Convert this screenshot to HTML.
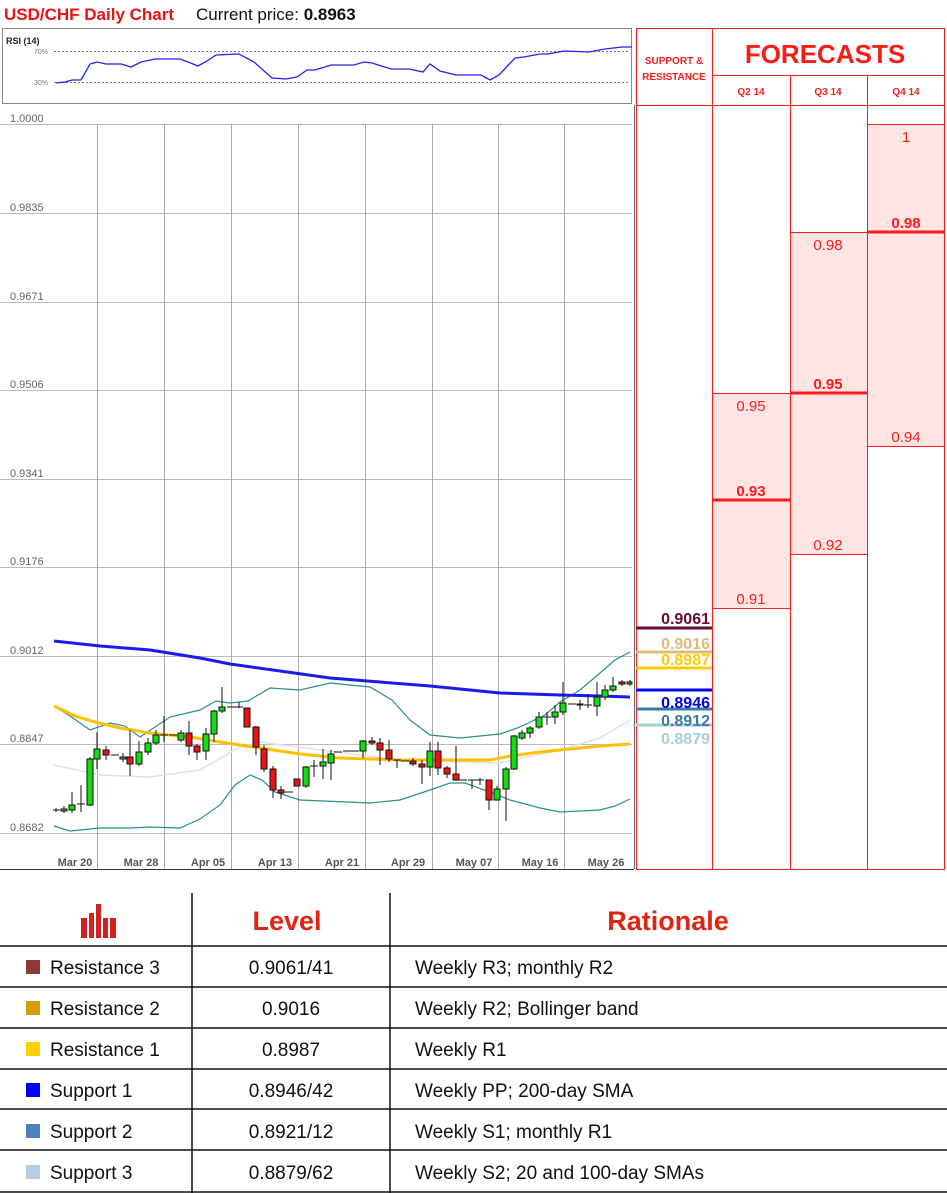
<!DOCTYPE html>
<html><head><meta charset="utf-8">
<style>
html,body{margin:0;padding:0;background:#fff;}
svg{display:block;}
text{font-family:"Liberation Sans",sans-serif;}
</style></head><body>
<svg width="947" height="1193" viewBox="0 0 947 1193" xmlns="http://www.w3.org/2000/svg">
<!-- title -->
<text x="4" y="20" font-size="17" font-weight="bold" fill="#ee1111">USD/CHF Daily Chart</text>
<text x="196" y="20" font-size="17" fill="#111">Current price: <tspan font-weight="bold">0.8963</tspan></text>

<!-- RSI box -->
<rect x="2.5" y="28.5" width="629" height="75" fill="#fff" stroke="#888"/>
<text x="6" y="44" font-size="9" font-weight="bold" fill="#222">RSI (14)</text>
<text x="34" y="54" font-size="7" fill="#777">70%</text>
<text x="34" y="85" font-size="7" fill="#777">30%</text>
<line x1="54" y1="51.5" x2="630" y2="51.5" stroke="#777" stroke-dasharray="2,2"/>
<line x1="54" y1="82.5" x2="630" y2="82.5" stroke="#777" stroke-dasharray="2,2"/>
<polyline fill="none" stroke="#2222ee" stroke-width="1.3" points="56,83 65,82 72,80 81,80 90,64 97,62 106,64 121,64 131,67 141,62 155,59 180,59 188,62 198,66 207,61 216,55 239,54 254,62 272,78 286,79 297,77 307,70 315,70 331,65 354,65 364,62 372,63 391,69 409,69 423,72 430,64 440,71 456,75 481,75 490,80 499,75 515,58 524,57 540,54 548,54 564,51 589,52 605,49 622,47 632,47"/>

<!-- main chart grid -->
<g stroke="#bbb" stroke-width="1">
<line x1="0" y1="124.5" x2="632" y2="124.5"/>
<line x1="0" y1="213.5" x2="632" y2="213.5"/>
<line x1="0" y1="302.5" x2="632" y2="302.5"/>
<line x1="0" y1="390.5" x2="632" y2="390.5"/>
<line x1="0" y1="479.5" x2="632" y2="479.5"/>
<line x1="0" y1="567.5" x2="632" y2="567.5"/>
<line x1="0" y1="656.5" x2="632" y2="656.5"/>
<line x1="0" y1="744.5" x2="632" y2="744.5"/>
<line x1="0" y1="833.5" x2="632" y2="833.5"/>
</g>
<g stroke="#aaa" stroke-width="1">
<line x1="97.5" y1="124" x2="97.5" y2="869"/>
<line x1="164.5" y1="124" x2="164.5" y2="869"/>
<line x1="231.5" y1="124" x2="231.5" y2="869"/>
<line x1="298.5" y1="124" x2="298.5" y2="869"/>
<line x1="365.5" y1="124" x2="365.5" y2="869"/>
<line x1="432.5" y1="124" x2="432.5" y2="869"/>
<line x1="498.5" y1="124" x2="498.5" y2="869"/>
<line x1="564.5" y1="124" x2="564.5" y2="869"/>
</g>
<line x1="0" y1="869.5" x2="634" y2="869.5" stroke="#333"/>
<line x1="634.5" y1="105" x2="634.5" y2="869" stroke="#666"/>
<g font-size="11" fill="#666">
<text x="10" y="122">1.0000</text>
<text x="10" y="211">0.9835</text>
<text x="10" y="300">0.9671</text>
<text x="10" y="388">0.9506</text>
<text x="10" y="477">0.9341</text>
<text x="10" y="565">0.9176</text>
<text x="10" y="654">0.9012</text>
<text x="10" y="742">0.8847</text>
<text x="10" y="831">0.8682</text>
</g>
<g font-size="11" font-weight="bold" fill="#555" text-anchor="middle">
<text x="75" y="866">Mar 20</text><text x="141" y="866">Mar 28</text><text x="208" y="866">Apr 05</text>
<text x="275" y="866">Apr 13</text><text x="342" y="866">Apr 21</text><text x="408" y="866">Apr 29</text>
<text x="474" y="866">May 07</text><text x="540" y="866">May 16</text><text x="606" y="866">May 26</text>
</g>

<!-- indicators -->
<polyline fill="none" stroke="#e2e2e2" stroke-width="1.5" points="54,765 100,775 150,777 200,770 240,747 260,742 320,750 400,760 500,763 560,750 600,738 630,720"/>
<polyline fill="none" stroke="#2a8f8f" stroke-width="1.2" points="54,706 70,716 90,730 110,723 125,726 140,737 170,717 200,710 216,701 230,703 248,701 270,688 300,690 330,683 370,687 392,700 410,720 430,735 460,738 500,734 520,727 545,715 560,702 580,690 600,673 615,660 630,652"/>
<polyline fill="none" stroke="#2a8f8f" stroke-width="1.2" points="54,826 70,831 100,828 130,828 150,827 180,828 200,819 220,805 235,785 250,775 262,780 275,792 300,800 370,803 400,800 430,790 450,783 465,783 490,792 510,800 540,808 560,812 600,810 615,806 630,799"/>
<polyline fill="none" stroke="#ffc000" stroke-width="3" points="54,706 75,716 95,722 120,728 150,733 190,737 220,742 260,748 300,754 340,758 400,760 450,760 490,760 510,756 540,752 570,749 600,746 630,744"/>
<polyline fill="none" stroke="#1a1aee" stroke-width="3" points="54,641 100,646 150,650 200,658 230,664 280,671 330,678 380,682 430,686 470,690 500,693 530,694 560,695 600,696 630,697"/>

<!-- candles -->
<g stroke="#111" stroke-width="1">
<line x1="56" y1="808" x2="56" y2="812"/><line x1="53" y1="810" x2="60" y2="810"/>
<line x1="64" y1="806" x2="64" y2="813"/><rect x="61" y="809" width="6" height="2" fill="#11dd11"/>
<line x1="72" y1="792" x2="72" y2="813"/><rect x="69" y="805" width="6" height="5" fill="#11dd11"/>
<line x1="81" y1="785" x2="81" y2="812"/><line x1="77" y1="804" x2="85" y2="804"/>
<line x1="90" y1="757" x2="90" y2="806"/><rect x="87" y="759" width="6" height="46" fill="#11dd11"/>
<line x1="97" y1="732" x2="97" y2="769"/><rect x="94" y="749" width="6" height="10" fill="#11dd11"/>
<line x1="106" y1="746" x2="106" y2="760"/><rect x="103" y="750" width="6" height="5" fill="#ee1111"/>
<line x1="111" y1="755" x2="119" y2="755"/>
<line x1="123" y1="753" x2="123" y2="762"/><rect x="120" y="757" width="6" height="2" fill="#11dd11"/>
<line x1="130" y1="730" x2="130" y2="776"/><rect x="127" y="757" width="6" height="7" fill="#ee1111"/>
<line x1="139" y1="741" x2="139" y2="766"/><rect x="136" y="752" width="6" height="12" fill="#11dd11"/>
<line x1="148" y1="738" x2="148" y2="755"/><rect x="145" y="743" width="6" height="9" fill="#11dd11"/>
<line x1="156" y1="730" x2="156" y2="745"/><rect x="153" y="735" width="6" height="8" fill="#11dd11"/>
<line x1="164" y1="716" x2="164" y2="742"/><line x1="160" y1="735" x2="168" y2="735"/>
<line x1="169" y1="735" x2="177" y2="735"/>
<line x1="181" y1="730" x2="181" y2="742"/><rect x="178" y="733" width="6" height="7" fill="#11dd11"/>
<line x1="189" y1="721" x2="189" y2="755"/><rect x="186" y="733" width="6" height="13" fill="#ee1111"/>
<line x1="197" y1="744" x2="197" y2="760"/><rect x="194" y="746" width="6" height="6" fill="#ee1111"/>
<line x1="206" y1="728" x2="206" y2="760"/><rect x="203" y="734" width="6" height="17" fill="#11dd11"/>
<line x1="214" y1="710" x2="214" y2="742"/><rect x="211" y="711" width="6" height="23" fill="#11dd11"/>
<line x1="222" y1="687" x2="222" y2="713"/><rect x="219" y="707" width="6" height="4" fill="#11dd11"/>
<line x1="227" y1="707" x2="235" y2="707"/>
<line x1="239" y1="702" x2="239" y2="708"/><line x1="235" y1="707" x2="243" y2="707"/>
<rect x="244" y="708" width="6" height="19" fill="#ee1111"/>
<line x1="256" y1="726" x2="256" y2="755"/><rect x="253" y="727" width="6" height="20" fill="#ee1111"/>
<line x1="264" y1="745" x2="264" y2="772"/><rect x="261" y="749" width="6" height="20" fill="#ee1111"/>
<line x1="273" y1="766" x2="273" y2="798"/><rect x="270" y="769" width="6" height="21" fill="#ee1111"/>
<line x1="281" y1="786" x2="281" y2="799"/><rect x="278" y="790" width="6" height="3" fill="#ee1111"/>
<line x1="285" y1="792" x2="293" y2="792"/>
<rect x="294" y="779" width="6" height="7" fill="#ee1111"/>
<line x1="306" y1="766" x2="306" y2="788"/><rect x="303" y="767" width="6" height="19" fill="#11dd11"/>
<line x1="314" y1="760" x2="314" y2="777"/><line x1="310" y1="766" x2="318" y2="766"/>
<line x1="323" y1="749" x2="323" y2="779"/><rect x="320" y="762" width="6" height="4" fill="#11dd11"/>
<line x1="331" y1="750" x2="331" y2="780"/><rect x="328" y="754" width="6" height="9" fill="#11dd11"/>
<line x1="334" y1="752" x2="342" y2="752"/>
<line x1="343" y1="751" x2="351" y2="751"/>
<line x1="351" y1="751" x2="359" y2="751"/>
<line x1="363" y1="740" x2="363" y2="758"/><rect x="360" y="741" width="6" height="10" fill="#11dd11"/>
<line x1="372" y1="737" x2="372" y2="745"/><rect x="369" y="741" width="6" height="2" fill="#ee1111"/>
<line x1="380" y1="738" x2="380" y2="765"/><rect x="377" y="743" width="6" height="7" fill="#ee1111"/>
<line x1="389" y1="740" x2="389" y2="762"/><rect x="386" y="750" width="6" height="9" fill="#ee1111"/>
<line x1="397" y1="760" x2="397" y2="768"/><line x1="393" y1="760" x2="401" y2="760"/>
<line x1="401" y1="761" x2="409" y2="761"/>
<line x1="413" y1="758" x2="413" y2="766"/><rect x="410" y="761" width="6" height="3" fill="#ee1111"/>
<line x1="422" y1="760" x2="422" y2="784"/><rect x="419" y="764" width="6" height="3" fill="#ee1111"/>
<line x1="430" y1="742" x2="430" y2="776"/><rect x="427" y="751" width="6" height="16" fill="#11dd11"/>
<line x1="438" y1="742" x2="438" y2="775"/><rect x="435" y="751" width="6" height="17" fill="#ee1111"/>
<line x1="447" y1="766" x2="447" y2="778"/><rect x="444" y="768" width="6" height="6" fill="#ee1111"/>
<line x1="456" y1="746" x2="456" y2="781"/><rect x="453" y="774" width="6" height="6" fill="#ee1111"/>
<line x1="459" y1="780" x2="467" y2="780"/>
<line x1="472" y1="780" x2="472" y2="789"/><line x1="468" y1="780" x2="476" y2="780"/>
<line x1="480" y1="778" x2="480" y2="785"/><line x1="476" y1="780" x2="484" y2="780"/>
<line x1="489" y1="780" x2="489" y2="810"/><rect x="486" y="780" width="6" height="20" fill="#ee1111"/>
<line x1="497" y1="786" x2="497" y2="800"/><rect x="494" y="789" width="6" height="11" fill="#11dd11"/>
<line x1="506" y1="767" x2="506" y2="821"/><rect x="503" y="769" width="6" height="20" fill="#11dd11"/>
<line x1="514" y1="735" x2="514" y2="770"/><rect x="511" y="736" width="6" height="33" fill="#11dd11"/>
<line x1="522" y1="730" x2="522" y2="740"/><rect x="519" y="733" width="6" height="5" fill="#11dd11"/>
<line x1="530" y1="726" x2="530" y2="738"/><rect x="527" y="728" width="6" height="5" fill="#11dd11"/>
<line x1="539" y1="712" x2="539" y2="729"/><rect x="536" y="717" width="6" height="10" fill="#11dd11"/>
<line x1="547" y1="712" x2="547" y2="725"/><line x1="543" y1="717" x2="551" y2="717"/>
<line x1="555" y1="705" x2="555" y2="724"/><rect x="552" y="712" width="6" height="5" fill="#11dd11"/>
<line x1="563" y1="682" x2="563" y2="715"/><rect x="560" y="703" width="6" height="9" fill="#11dd11"/>
<line x1="568" y1="704" x2="576" y2="704"/>
<line x1="580" y1="700" x2="580" y2="710"/><rect x="577" y="704" width="6" height="1" fill="#ee1111"/>
<line x1="588" y1="694" x2="588" y2="708"/><line x1="584" y1="705" x2="592" y2="705"/>
<line x1="597" y1="682" x2="597" y2="716"/><rect x="594" y="697" width="6" height="9" fill="#11dd11"/>
<line x1="605" y1="685" x2="605" y2="700"/><rect x="602" y="690" width="6" height="7" fill="#11dd11"/>
<line x1="613" y1="677" x2="613" y2="692"/><rect x="610" y="686" width="6" height="4" fill="#11dd11"/>
<line x1="622" y1="680" x2="622" y2="686"/><rect x="619" y="682" width="6" height="2" fill="#ee1111"/>
<line x1="630" y1="680" x2="630" y2="686"/><rect x="627" y="682" width="5" height="2" fill="#11dd11"/>
</g>

<!-- right forecast panel -->
<rect x="867" y="124" width="77" height="322" fill="#ffe4e4"/>
<rect x="790" y="232" width="77" height="322" fill="#ffe4e4"/>
<rect x="712" y="393" width="78" height="215" fill="#ffe4e4"/>
<g stroke="#ff1a1a" stroke-width="1" fill="none">
<rect x="636.5" y="28.5" width="308" height="841"/>
<line x1="712.5" y1="28" x2="712.5" y2="869"/>
<line x1="790.5" y1="75" x2="790.5" y2="869"/>
<line x1="867.5" y1="75" x2="867.5" y2="869"/>
<line x1="712" y1="75.5" x2="945" y2="75.5"/>
<line x1="636" y1="105.5" x2="945" y2="105.5"/>
<line x1="867" y1="124.5" x2="945" y2="124.5"/>
<line x1="867" y1="446.5" x2="945" y2="446.5"/>
<line x1="790" y1="554.5" x2="867" y2="554.5"/>
<line x1="712" y1="393.5" x2="790" y2="393.5"/>
<line x1="712" y1="608.5" x2="790" y2="608.5"/>
<line x1="790" y1="232.5" x2="867" y2="232.5"/>
</g>
<g stroke="#ff1a1a" stroke-width="3">
<line x1="867" y1="232" x2="945" y2="232"/>
<line x1="790" y1="393" x2="867" y2="393"/>
<line x1="712" y1="500" x2="790" y2="500"/>
</g>
<g fill="#ff1a1a" text-anchor="middle">
<text x="674" y="64" font-size="10" font-weight="bold">SUPPORT &amp;</text>
<text x="674" y="80" font-size="10" font-weight="bold">RESISTANCE</text>
<text x="825" y="63" font-size="26" font-weight="bold">FORECASTS</text>
<text x="751" y="95" font-size="10" font-weight="bold">Q2 14</text>
<text x="828" y="95" font-size="10" font-weight="bold">Q3 14</text>
<text x="906" y="95" font-size="10" font-weight="bold">Q4 14</text>
<g font-size="15">
<text x="906" y="142">1</text>
<text x="906" y="442">0.94</text>
<text x="828" y="250">0.98</text>
<text x="828" y="550">0.92</text>
<text x="751" y="411">0.95</text>
<text x="751" y="604">0.91</text>
</g>
<g font-size="15" font-weight="bold">
<text x="906" y="228">0.98</text>
<text x="828" y="389">0.95</text>
<text x="751" y="496">0.93</text>
</g>
</g>
<!-- S&R levels -->
<g stroke-width="3">
<line x1="636" y1="628" x2="712" y2="628" stroke="#6b0a33"/>
<line x1="636" y1="652" x2="712" y2="652" stroke="#e0bb77"/>
<line x1="636" y1="668" x2="712" y2="668" stroke="#ffcc00"/>
<line x1="636" y1="690" x2="712" y2="690" stroke="#0000ee"/>
<line x1="636" y1="709" x2="712" y2="709" stroke="#3a7aa0"/>
<line x1="636" y1="725" x2="712" y2="725" stroke="#a8d0d4"/>
</g>
<g font-size="16" font-weight="bold" text-anchor="end">
<text x="710" y="624" fill="#6b0a33">0.9061</text>
<text x="710" y="649" fill="#e0bb77">0.9016</text>
<text x="710" y="665" fill="#ffcc00">0.8987</text>
<text x="710" y="708" fill="#0000ee">0.8946</text>
<text x="710" y="726" fill="#3a7aa0">0.8912</text>
<text x="710" y="744" fill="#a8d0d4">0.8879</text>
</g>

<!-- table -->
<g stroke="#111" stroke-width="1.5">
<line x1="192" y1="893" x2="192" y2="1193"/>
<line x1="390" y1="893" x2="390" y2="1193"/>
<line x1="0" y1="946" x2="947" y2="946"/>
<line x1="0" y1="987" x2="947" y2="987"/>
<line x1="0" y1="1028" x2="947" y2="1028"/>
<line x1="0" y1="1069" x2="947" y2="1069"/>
<line x1="0" y1="1109" x2="947" y2="1109"/>
<line x1="0" y1="1150" x2="947" y2="1150"/>
<line x1="0" y1="1192" x2="947" y2="1192"/>
</g>
<!-- bar icon -->
<g fill="#d92020">
<rect x="81" y="918" width="6" height="20"/>
<rect x="89" y="913" width="5" height="25"/>
<rect x="96" y="904" width="5" height="34"/>
<rect x="103" y="918" width="5" height="20"/>
<rect x="110" y="918" width="6" height="20"/>
</g>
<g fill="#e02410" font-size="27" font-weight="bold" text-anchor="middle">
<text x="287" y="930">Level</text>
<text x="668" y="930">Rationale</text>
</g>
<rect x="26" y="960" width="14" height="14" fill="#8b3a3a"/>
<rect x="26" y="1001" width="14" height="14" fill="#d4a000"/>
<rect x="26" y="1042" width="14" height="14" fill="#ffd000"/>
<rect x="26" y="1083" width="14" height="14" fill="#0000ff"/>
<rect x="26" y="1124" width="14" height="14" fill="#4f81bd"/>
<rect x="26" y="1165" width="14" height="14" fill="#b8cce4"/>
<g font-size="19" fill="#111">
<text x="50" y="974">Resistance 3</text>
<text x="50" y="1015">Resistance 2</text>
<text x="50" y="1056">Resistance 1</text>
<text x="50" y="1097">Support 1</text>
<text x="50" y="1138">Support 2</text>
<text x="50" y="1179">Support 3</text>
<g text-anchor="middle">
<text x="291" y="974">0.9061/41</text>
<text x="291" y="1015">0.9016</text>
<text x="291" y="1056">0.8987</text>
<text x="291" y="1097">0.8946/42</text>
<text x="291" y="1138">0.8921/12</text>
<text x="291" y="1179">0.8879/62</text>
</g>
<text x="415" y="974">Weekly R3; monthly R2</text>
<text x="415" y="1015">Weekly R2; Bollinger band</text>
<text x="415" y="1056">Weekly R1</text>
<text x="415" y="1097">Weekly PP; 200-day SMA</text>
<text x="415" y="1138">Weekly S1; monthly R1</text>
<text x="415" y="1179">Weekly S2; 20 and 100-day SMAs</text>
</g>
</svg>
</body></html>
